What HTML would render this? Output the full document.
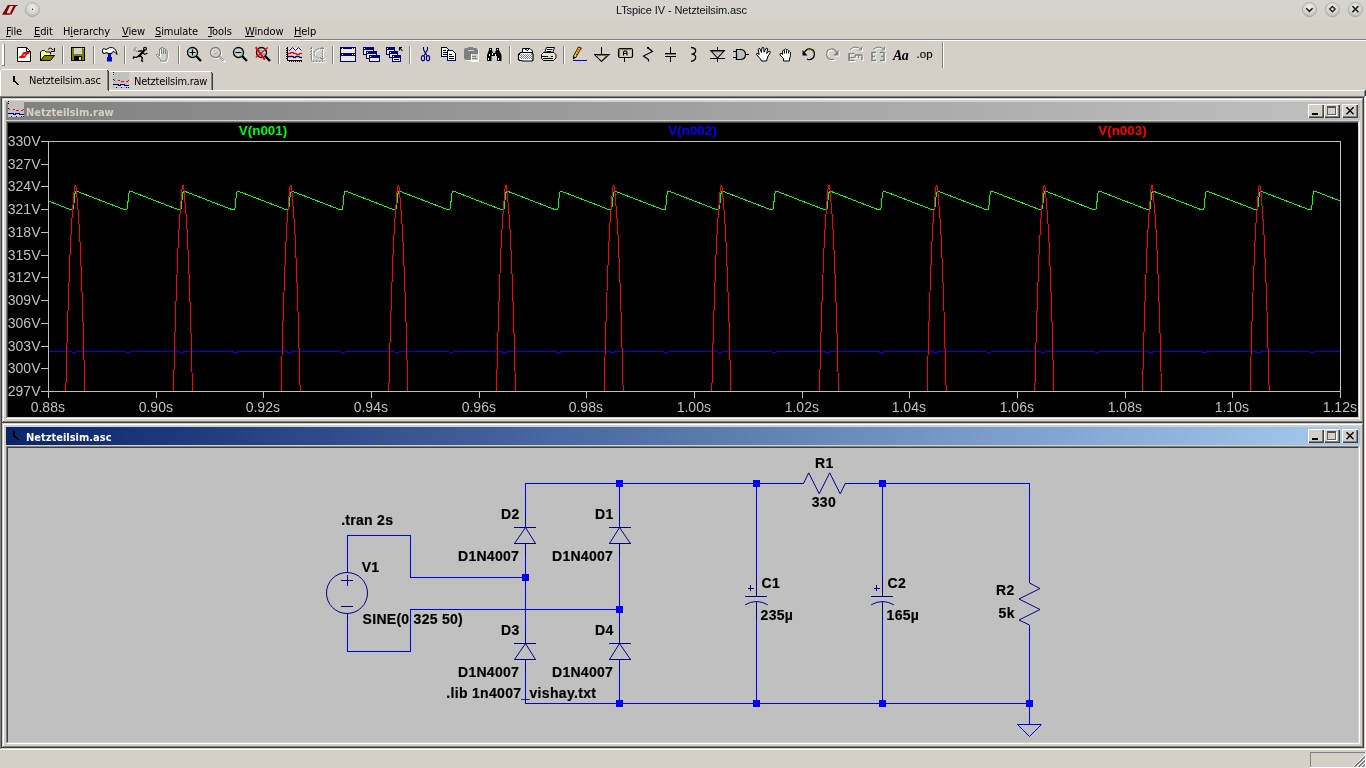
<!DOCTYPE html>
<html lang="en"><head><meta charset="utf-8"><title>LTspice IV - Netzteilsim.asc</title>
<style>
html,body{margin:0;padding:0;}
body{width:1366px;height:768px;overflow:hidden;position:relative;background:#d4d0c8;font-family:"Liberation Sans","DejaVu Sans",sans-serif;font-size:11px;color:#000;}
.abs{position:absolute;}
.px{position:absolute;}
#titlebar{left:0;top:0;width:1366px;height:20px;background:linear-gradient(#d6d3cf,#d6d3cf);}
#wtitle{left:616px;top:1px;width:200px;height:20px;line-height:19px;text-align:left;font-size:11px;color:#111;letter-spacing:-0.1px;white-space:nowrap;}
#menubar{left:0;top:20px;width:1366px;height:20px;}
.mi{position:absolute;top:25px;font-size:11px;line-height:13px;white-space:nowrap;font-family:"DejaVu Sans Condensed","DejaVu Sans","Liberation Sans",sans-serif;letter-spacing:-0.1px;}
.mi u{text-decoration:underline;text-underline-offset:1px;}
.tabtxt{position:absolute;font-size:11px;line-height:13px;white-space:nowrap;font-family:"DejaVu Sans Condensed","DejaVu Sans","Liberation Sans",sans-serif;letter-spacing:-0.25px;}
.child{position:absolute;left:2px;width:1362px;height:325px;background:#d4d0c8;box-shadow:inset -1px -1px 0 #404040, inset 1px 1px 0 #d4d0c8, inset -2px -2px 0 #808080, inset 2px 2px 0 #fff;}
.ctitle{position:absolute;left:4px;top:4px;width:1354px;height:18px;}
.ctitle span{position:absolute;left:20px;top:4px;font:bold 11px/14px "DejaVu Sans Condensed","DejaVu Sans","Liberation Sans",sans-serif;white-space:nowrap;}
.view{position:absolute;left:4px;top:23px;width:1354px;height:298px;box-shadow:inset -1px -1px 0 #fff, inset 1px 1px 0 #808080, inset -2px -2px 0 #d4d0c8, inset 2px 2px 0 #404040;}
.content{position:absolute;left:2px;top:2px;width:1350px;height:294px;overflow:hidden;}
.cbtn{position:absolute;top:2px;width:16px;height:14px;background:#d4d0c8;box-shadow:inset 1px 1px 0 #fff, inset -1px -1px 0 #404040, inset -2px -2px 0 #808080;}
svg{position:absolute;left:0;top:0;overflow:visible;}
svg text{white-space:pre;}
#wtitle,.mi,.tabtxt,.ctitle span,svg{will-change:transform;}
</style></head><body>

<div class="abs" id="titlebar"></div>
<div class="abs" id="wtitle">LTspice IV - Netzteilsim.asc</div>
<svg width="1366" height="20" viewBox="0 0 1366 20">
<defs>
<radialGradient id="kb" cx="50%" cy="35%" r="65%"><stop offset="0" stop-color="#eeedeb"/><stop offset="0.7" stop-color="#d2d0cc"/><stop offset="1" stop-color="#aeaca8"/></radialGradient>
</defs>
<path d="M7.8 4.9 H18 L17.2 6.1 H16 L11.3 14.8 H2 Z" fill="#800000"/><path d="M9.9 6.1 H13.4 L10 13.3 H6.5 Z" fill="#d6d3cf"/><path d="M9.9 13.3 L10.5 14.9" stroke="#d6d3cf" stroke-width="0.6"/>
<circle cx="32.4" cy="9.6" r="7" fill="url(#kb)" stroke="#aaa8a4" stroke-width="0.8"/>
<rect x="32" y="8.6" width="1" height="1.4" fill="#333"/>
<g>
<circle cx="1309.4" cy="9.6" r="7.1" fill="url(#kb)" stroke="#aaa8a4" stroke-width="0.8"/>
<path d="M1306.2 8.3 L1309.4 11.4 L1312.6 8.3" fill="none" stroke="#222" stroke-width="1.5"/>
<circle cx="1332.4" cy="9.6" r="7.1" fill="url(#kb)" stroke="#aaa8a4" stroke-width="0.8"/>
<path d="M1332.4 6.4 L1335.1 9.1 L1332.4 11.8 L1329.7 9.1 Z" fill="none" stroke="#222" stroke-width="1.4"/>
<circle cx="1355.4" cy="9.6" r="7.1" fill="url(#kb)" stroke="#aaa8a4" stroke-width="0.8"/>
<path d="M1352.4 6.1 L1358.4 12.1 M1358.4 6.1 L1352.4 12.1" fill="none" stroke="#222" stroke-width="1.5"/>
</g>
</svg>
<div class="mi" style="left:6px"><u>F</u>ile</div>
<div class="mi" style="left:34px"><u>E</u>dit</div>
<div class="mi" style="left:63px">H<u>i</u>erarchy</div>
<div class="mi" style="left:122px"><u>V</u>iew</div>
<div class="mi" style="left:155px"><u>S</u>imulate</div>
<div class="mi" style="left:208px"><u>T</u>ools</div>
<div class="mi" style="left:245px"><u>W</u>indow</div>
<div class="mi" style="left:294px"><u>H</u>elp</div>
<div class="px" style="left:0;top:39px;width:1366px;height:1px;background:#808080"></div>
<div class="px" style="left:0;top:40px;width:1366px;height:1px;background:#fff"></div>
<div class="px" style="left:2px;top:44px;width:2px;height:21px;background:#fff"></div>
<div class="px" style="left:4px;top:44px;width:1px;height:22px;background:#808080"></div><div class="px" style="left:2px;top:65px;width:2px;height:1px;background:#808080"></div>
<div class="px" style="left:62px;top:46px;width:1px;height:18px;background:#808080"></div>
<div class="px" style="left:63px;top:46px;width:1px;height:18px;background:#fff"></div>
<div class="px" style="left:93px;top:46px;width:1px;height:18px;background:#808080"></div>
<div class="px" style="left:94px;top:46px;width:1px;height:18px;background:#fff"></div>
<div class="px" style="left:124px;top:46px;width:1px;height:18px;background:#808080"></div>
<div class="px" style="left:125px;top:46px;width:1px;height:18px;background:#fff"></div>
<div class="px" style="left:178px;top:46px;width:1px;height:18px;background:#808080"></div>
<div class="px" style="left:179px;top:46px;width:1px;height:18px;background:#fff"></div>
<div class="px" style="left:278px;top:46px;width:1px;height:18px;background:#808080"></div>
<div class="px" style="left:279px;top:46px;width:1px;height:18px;background:#fff"></div>
<div class="px" style="left:332px;top:46px;width:1px;height:18px;background:#808080"></div>
<div class="px" style="left:333px;top:46px;width:1px;height:18px;background:#fff"></div>
<div class="px" style="left:409px;top:46px;width:1px;height:18px;background:#808080"></div>
<div class="px" style="left:410px;top:46px;width:1px;height:18px;background:#fff"></div>
<div class="px" style="left:509px;top:46px;width:1px;height:18px;background:#808080"></div>
<div class="px" style="left:510px;top:46px;width:1px;height:18px;background:#fff"></div>
<div class="px" style="left:563px;top:46px;width:1px;height:18px;background:#808080"></div>
<div class="px" style="left:564px;top:46px;width:1px;height:18px;background:#fff"></div>
<div class="px" style="left:942px;top:42px;width:1px;height:26px;background:#808080"></div><div class="px" style="left:943px;top:42px;width:1px;height:26px;background:#fff"></div>
<svg width="1366" height="70" viewBox="0 0 1366 70"><g transform="translate(16,46)"><path d="M1.5 1.5 H10.5 L14.5 5.5 V15.5 H1.5 Z" fill="#fff" stroke="#000"/><path d="M10.5 1.5 V5.5 H14.5" fill="none" stroke="#000"/><path d="M7.4 6 H14 L12.7 8 H11.4 L8.7 12 H2.4 L3.8 10 H5 Z" fill="#ff0000"/><path d="M8 8.2 H9.5 L8.6 9.8 H7.1 Z" fill="#fff"/></g><g transform="translate(39,46)"><path d="M1.5 14.5 V6 L3 4.5 H5.5 L7 6 H11.5 V8.5" fill="#ffff80" stroke="#000"/><path d="M1.5 14.5 L5.5 9.5 H15.5 L11.5 14.5 Z" fill="#808000" stroke="#000"/><path d="M9 3.5 Q11.5 0.5 14.3 4.2" fill="none" stroke="#000"/><path d="M15.5 2 V5.5 H12" fill="none" stroke="#000"/></g><g transform="translate(70,46)" shape-rendering="crispEdges"><rect x="1.5" y="1.5" width="13" height="13" fill="#808000" stroke="#000"/><rect x="4" y="2" width="8" height="6" fill="#d4d0c8"/><rect x="4" y="10" width="8" height="4" fill="#000"/><rect x="9" y="11" width="2" height="3" fill="#d4d0c8"/><rect x="13" y="2" width="1" height="1" fill="#d4d0c8"/></g><g transform="translate(101,46)"><defs><linearGradient id="hm" x1="0" y1="0" x2="0" y2="1"><stop offset="0" stop-color="#fff"/><stop offset="0.55" stop-color="#fff"/><stop offset="1" stop-color="#909090"/></linearGradient></defs><path d="M1.5 4.5 Q1.5 2.5 3.2 2.6 L5 3.6 Q8.5 0.8 11.5 1.6 Q15.5 3 16 8.6 Q14.5 6.2 12.8 5.6 Q11 5.4 10.8 7.6 L6.4 7.6 L6.2 6.4 L3.2 7.6 Q1.5 7.6 1.5 6 Z" fill="url(#hm)" stroke="#000"/><path d="M7 8 H10 V11 H11 V15.5 H6 V11 H7 Z" fill="#0000c8"/></g><g transform="translate(132,46)"><g stroke="#000" fill="none" stroke-linecap="round"><circle cx="13" cy="2.7" r="1.4" fill="#fff" stroke-width="1.2"/><path d="M12 4.6 L7.2 10" stroke-width="2.2"/><path d="M10.8 5.6 L8.8 4.6 L6.5 5.4" stroke-width="1.2"/><path d="M10.6 6.8 L12.8 8.4 L15 7.2" stroke-width="1.2"/><path d="M7.2 10 L4 11.4 L1.6 11 L1.4 12.2" stroke-width="1.4"/><path d="M8 9.6 L10.4 12 L9.6 14.8 L10.6 15.2" stroke-width="1.4"/></g><path d="M2 2.5 L4.5 1.5 M1 4.5 L4 3.5 M3.5 5.8 L5.5 5" stroke="#808080" stroke-width="0.9" fill="none"/></g><g transform="translate(155,46)"><path d="M5.5 15 L5.5 13.5 L1.5 9.5 Q1 8.2 2.2 8.2 L4.5 10 V3 Q5.3 1.8 6.2 3 V1.8 Q7.2 0.6 8.2 1.8 V2.6 Q9.2 1.6 10.2 2.8 V4 Q11.2 3.2 12.2 4.4 V11.5 L11.2 13.5 V15 Z" fill="none" stroke="#fff" transform="translate(1,1)"/><path d="M5.5 15 L5.5 13.5 L1.5 9.5 Q1 8.2 2.2 8.2 L4.5 10 V3 Q5.3 1.8 6.2 3 V1.8 Q7.2 0.6 8.2 1.8 V2.6 Q9.2 1.6 10.2 2.8 V4 Q11.2 3.2 12.2 4.4 V11.5 L11.2 13.5 V15 Z" fill="none" stroke="#808080"/><path d="M6.5 3 V8 M8.5 2.5 V8 M10.5 4 V8" stroke="#808080" fill="none"/></g><g transform="translate(186,46)"><circle cx="6.5" cy="6.5" r="5" fill="none" stroke="#000" stroke-width="1.3"/><path d="M10.3 10.3 L15 15" stroke="#000" stroke-width="2.3"/><path d="M2.6 5.2 Q3.2 3.4 4.8 2.8" stroke="#00e8e8" stroke-width="1.1" fill="none"/><path d="M8.2 10 Q9.8 9.4 10.4 7.8" stroke="#00e8e8" stroke-width="1.1" fill="none"/><path d="M3.5 6.5 H9.5 M6.5 3.5 V9.5" stroke="#000" stroke-width="1.2"/></g><g transform="translate(209,46)"><circle cx="7.5" cy="7.5" r="5" fill="none" stroke="#fff" stroke-width="1.2"/><path d="M11.5 11.5 L16 16" stroke="#fff" stroke-width="2"/><circle cx="6.5" cy="6.5" r="5" fill="none" stroke="#808080" stroke-width="1.3"/><path d="M10.3 10.3 L15 15" stroke="#808080" stroke-width="2.3" stroke-dasharray='1 0.6'/><path d="M4 5.5 Q4.6 4.2 6 3.8 M5.5 8 Q7.5 8 8.4 6" stroke="#a0a0a0" stroke-width="0.9" fill="none"/></g><g transform="translate(232,46)"><circle cx="6.5" cy="6.5" r="5" fill="none" stroke="#000" stroke-width="1.3"/><path d="M10.3 10.3 L15 15" stroke="#000" stroke-width="2.3"/><path d="M2.6 5.2 Q3.2 3.4 4.8 2.8" stroke="#00e8e8" stroke-width="1.1" fill="none"/><path d="M8.2 10 Q9.8 9.4 10.4 7.8" stroke="#00e8e8" stroke-width="1.1" fill="none"/><path d="M3.5 6.5 H9.5" stroke="#000" stroke-width="1.2"/></g><g transform="translate(255,46)"><circle cx="6.5" cy="6.5" r="5" fill="none" stroke="#000" stroke-width="1.3"/><path d="M10.3 10.3 L15 15" stroke="#000" stroke-width="2.3"/><path d="M4.5 3.5 H7 V5 H4.5 Z M7.5 7 H10 V9 H7.5 Z" fill="#00e8e8"/><path d="M0.8 1.2 L9.8 13.6" stroke="#ff0000" stroke-width="2"/><path d="M12.8 1.6 L0.8 11.4" stroke="#ff0000" stroke-width="1.3"/></g><g transform="translate(286,46)" shape-rendering="crispEdges"><rect x="2" y="2" width="14" height="12" fill="#ece9d8"/><path d="M1.5 1 V15 M1 14.5 H16" stroke="#000" fill="none"/><path d="M0.5 2 V3 M0.5 4 V5 M0.5 6 V7 M0.5 8 V9 M0.5 10 V11 M0.5 12 V13 M3 15.5 H4 M5 15.5 H6 M7 15.5 H8 M9 15.5 H10 M11 15.5 H12 M13 15.5 H14 M15 15.5 H16" stroke="#000" fill="none"/></g><g transform="translate(286,46)"><path d="M2.5 3.6 L3.5 4.6 L6.5 1.6 L9.5 4.6 L12.5 1.6 L15.5 4.6" stroke="#0000a0" fill="none"/><path d="M2 7.5 H4 L5 6.5 H7 L8 7.5 H10 L11 8.5 H13 L14 7.5 H16" stroke="#ff0000" stroke-width="1.5" fill="none"/><path d="M2 10.5 H7 L8 11.5 H9 L10 10.5 H13 L14 11.5 H16" stroke="#000080" stroke-width="1.3" fill="none"/></g><g transform="translate(309,46)"><path d="M2.5 1 V15 H16 M1.5 2 V3 M1.5 5 V6 M1.5 8 V9 M1.5 11 V12 M4 15.5 H5 M7 15.5 H8 M10 15.5 H11 M13 15.5 H14 M13.5 1.5 V13.5 M13.2 2 Q5.2 3 5.2 7.5 Q5.2 12 13.2 13 M11.5 3.5 L13.5 1.5 L15.5 3.5 M11.5 11.5 L13.5 13.5 L15.5 11.5" stroke="#fff" fill="none" transform="translate(1,1)"/><path d="M2.5 1 V15 H16 M1.5 2 V3 M1.5 5 V6 M1.5 8 V9 M1.5 11 V12 M4 15.5 H5 M7 15.5 H8 M10 15.5 H11 M13 15.5 H14 M13.5 1.5 V13.5 M13.2 2 Q5.2 3 5.2 7.5 Q5.2 12 13.2 13 M11.5 3.5 L13.5 1.5 L15.5 3.5 M11.5 11.5 L13.5 13.5 L15.5 11.5" stroke="#808080" fill="none" stroke-dasharray="2 0.7"/></g><g transform="translate(340,46)" shape-rendering="crispEdges"><rect x="0.5" y="1.5" width="15" height="14" fill="#ece9d8" stroke="#000080"/><rect x="1" y="1" width="15" height="2" fill="#000080"/><rect x="1" y="7" width="15" height="3" fill="#000080"/><rect x="2" y="2" width="1" height="1" fill="#fff"/><rect x="12" y="2" width="1" height="1" fill="#fff"/><rect x="14" y="2" width="1" height="1" fill="#fff"/><rect x="2" y="8" width="1" height="1" fill="#fff"/><rect x="12" y="8" width="1" height="1" fill="#fff"/><rect x="14" y="8" width="1" height="1" fill="#fff"/></g><g transform="translate(363,46)" shape-rendering="crispEdges"><rect x="0.5" y="1.5" width="10" height="7" fill="#ece9d8" stroke="#000080"/><rect x="0" y="1" width="11" height="3" fill="#000080"/><rect x="1" y="2" width="1" height="1" fill="#fff"/><rect x="3.5" y="5.5" width="10" height="7" fill="#ece9d8" stroke="#000080"/><rect x="3" y="5" width="11" height="3" fill="#000080"/><rect x="4" y="6" width="1" height="1" fill="#fff"/><rect x="6.5" y="9.5" width="10" height="6" fill="#ece9d8" stroke="#000080"/><rect x="6" y="9" width="11" height="3" fill="#000080"/><rect x="7" y="10" width="1" height="1" fill="#fff"/></g><g transform="translate(386,46)" shape-rendering="crispEdges"><rect x="0.5" y="1.5" width="8" height="7" fill="#ece9d8" stroke="#000080"/><rect x="0" y="1" width="9" height="3" fill="#000080"/><rect x="1" y="2" width="1" height="1" fill="#fff"/><rect x="3.5" y="5.5" width="8" height="6" fill="#ece9d8" stroke="#000080"/><rect x="3" y="5" width="9" height="3" fill="#000080"/><rect x="4" y="6" width="1" height="1" fill="#fff"/><rect x="6.5" y="9.5" width="8" height="6" fill="#ece9d8" stroke="#000080"/><rect x="6" y="9" width="9" height="3" fill="#000080"/><rect x="7" y="10" width="1" height="1" fill="#fff"/><rect x="8" y="13" width="5" height="1" fill="#000"/></g><g transform="translate(386,46)"><path d="M13 1.5 H16 M13.5 1 V4.5 M13.5 1.5 L16.5 5" stroke="#000" stroke-width="1.1" fill="none"/></g><g transform="translate(417,46)"><path d="M6.5 1 L6.5 3.5 L9.8 9.6 M10.5 1 L10.5 3.5 L7.2 9.6" stroke="#000080" stroke-width="1.1" fill="none"/><ellipse cx="6" cy="12.2" rx="1.6" ry="2.6" fill="none" stroke="#000080" stroke-width="1.1"/><ellipse cx="11" cy="12.2" rx="1.6" ry="2.6" fill="none" stroke="#000080" stroke-width="1.1"/></g><g transform="translate(440,46)" shape-rendering="crispEdges"><path d="M1.5 1.5 H6.5 L8.5 3.5 V10.5 H1.5 Z" fill="#fff" stroke="#000"/><path d="M3 4.5 H6 M3 6.5 H7 M3 8.5 H7" stroke="#000"/><path d="M7.5 4.5 H12.5 L15.5 7.5 V14.5 H7.5 Z" fill="#fff" stroke="#000080"/><path d="M9 8.5 H12 M9 10.5 H14 M9 12.5 H14" stroke="#000"/></g><g transform="translate(463,46)"><rect x="2" y="2" width="14" height="13" rx="2" fill="#fff"/><rect x="1" y="2" width="14" height="12" rx="2" fill="#808080"/><rect x="5" y="1" width="5" height="2" fill="#808080"/><rect x="5" y="4" width="6" height="1" fill="#d4d0c8"/><rect x="8" y="8" width="8" height="8" fill="#fff"/><rect x="8" y="8" width="7" height="6" fill="#d4d0c8"/><rect x="8" y="8" width="1" height="7" fill="#fff"/><rect x="9" y="10" width="4" height="1" fill="#808080"/><rect x="9" y="12" width="5" height="1" fill="#808080"/></g><g transform="translate(486,46)"><path d="M3 2 H6 V4 L7 7 H9 L10 4 V2 H13 V4 L15.5 9 V15 H11 V10 H5.5 V15 H1 V9 L3 4 Z" fill="#000"/><rect x="4" y="3" width="1" height="1" fill="#fff"/><rect x="11" y="3" width="1" height="1" fill="#fff"/><rect x="3" y="8" width="1" height="2" fill="#fff"/><rect x="6" y="7" width="1" height="2" fill="#fff"/><rect x="9" y="8" width="1" height="2" fill="#fff"/><rect x="2" y="12" width="1" height="2" fill="#fff"/><rect x="12" y="12" width="1" height="2" fill="#fff"/></g><g transform="translate(517,46)"><defs><pattern id="dth" width="2" height="2" patternUnits="userSpaceOnUse"><rect width="2" height="2" fill="#fff"/><rect width="1" height="1" fill="#808080"/><rect x="1" y="1" width="1" height="1" fill="#808080"/></pattern></defs><path d="M5.5 6.5 V2.5 H13 L15.5 5 V7" fill="#fff" stroke="#000"/><path d="M8 3.5 H9.5 M11 3.5 H12 M9.5 4.5 H11" stroke="#000"/><path d="M3.5 6.5 H14.5 L16 8 V14 L15 15 H5.5 L4.5 14.5 H2.5 L1.5 13.5 V8.5 Z" fill="#fff" stroke="#000" stroke-width="1.2"/><rect x="3" y="8" width="12" height="5" fill="url(#dth)"/><rect x="2" y="8" width="1" height="1" fill="#000"/></g><g transform="translate(540,46)"><path d="M4.5 7 L6.5 1.5 H14.5 L12.5 7" fill="#fff" stroke="#000"/><path d="M7 3.5 H12.5 M6.5 5.5 H11.5" stroke="#000"/><path d="M1.5 8.5 L3.5 6.5 H14 L16 8.5 V12 L13.5 14.5 H3.5 L1.5 12.5 Z" fill="#e4e2dc" stroke="#000"/><path d="M2 10.5 H13 M3 12.5 H13" stroke="#000"/><rect x="8" y="10" width="3" height="1.6" fill="#e8e000"/></g><g transform="translate(571,46)"><path d="M7.5 1 L10 2.2 L4.6 11.8 L2.2 10.6 Z" fill="#f8e800" stroke="#000" stroke-width="0.9"/><path d="M9 1.2 L10.6 2 L9.6 3.8" fill="#ff0000" stroke="#ff0000" stroke-width="0.8"/><path d="M2.2 10.6 L4.6 11.8 L1.8 13.8 Z" fill="#000"/><path d="M7 3.4 L8.4 4.2 M5.8 5.6 L7.2 6.4 M4.6 7.8 L6 8.6" stroke="#ff0000" stroke-width="1"/><rect x="2" y="14" width="14" height="1" fill="#0000ff"/></g><g transform="translate(594,46)"><path d="M7.5 1 V8" stroke="#000" shape-rendering="crispEdges"/><path d="M0 8.5 H15.5" stroke="#000" shape-rendering="crispEdges"/><path d="M0.8 8.8 L7.5 15.4 L14.6 8.8" fill="none" stroke="#000" stroke-width="1.1"/><path d="M3 9.5 H12.5 L8 14" fill="none" stroke="#808000" stroke-width="1"/></g><g transform="translate(617,46)"><rect x="1.5" y="2.5" width="14" height="9" rx="1.5" fill="#d4d0c8" stroke="#000" stroke-width="1.2"/><path d="M2.6 10.5 V3.6 H14" stroke="#808000" fill="none"/><path d="M7.5 12 V16" stroke="#000" shape-rendering="crispEdges"/><path d="M6.5 9.5 V6 L7.5 5 H9 L10 6 V9.5 M6.5 7.5 H10" stroke="#000" stroke-width="1.1" fill="none"/></g><g transform="translate(640,46)"><path d="M7.5 1.5 L12.5 5.5 L3.5 10 L8.5 13.5 V15.5" stroke="#000" stroke-width="1.2" fill="none"/><rect x="7" y="1" width="2" height="1.6" fill="#000"/></g><g transform="translate(663,46)" shape-rendering="crispEdges"><path d="M7.5 1 V7 M7.5 11 V16" stroke="#000"/><rect x="2" y="7" width="11" height="1" fill="#000"/><rect x="2" y="10" width="11" height="1" fill="#000"/><rect x="2" y="8" width="11" height="0.5" fill="#808080"/><rect x="2" y="9.5" width="11" height="0.5" fill="#808080"/></g><g transform="translate(686,46)"><path d="M5 1.5 Q10 2 9.6 5 Q9.4 8 5.5 8.2 Q10 8.6 9.6 11.6 Q9.4 14.6 5 15.4" stroke="#000" stroke-width="1.3" fill="none"/></g><g transform="translate(709,46)"><path d="M8.5 1 V16" stroke="#000" shape-rendering="crispEdges"/><path d="M1 4.5 H16 M1 12.5 H16" stroke="#000" shape-rendering="crispEdges"/><path d="M2 5 L8.5 12 L15 5 Z" fill="#c0c0c0" stroke="#000" stroke-width="1.1"/></g><g transform="translate(732,46)"><path d="M4.5 3.5 H9 Q13.5 4 13.5 8.5 Q13.5 13 9 13.5 H4.5 Z" fill="#c0c0c0" stroke="#000" stroke-width="1.2"/><path d="M1 5.5 H4 M1 11.5 H4 M14 8.5 H17" stroke="#000" shape-rendering="crispEdges"/></g><g transform="translate(755,46)"><path d="M6.5 15 L5.5 13 L1.5 8.6 Q1.2 7 2.8 7.4 L4.2 8.6 L3.2 3.4 Q3.8 1.6 5 2.8 L6.4 6.4 L7 1.8 Q8 0.4 8.8 1.8 L9 6.2 L11 2.4 Q12.2 1.4 12.8 2.8 L11.6 7.4 L14.2 5.2 Q15.6 5 15.2 6.6 L12.6 11 L11.6 15 Z" fill="#fff" stroke="#000"/></g><g transform="translate(778,46)"><path d="M5.5 15 V12.5 L2 9 Q1.6 7.2 3.2 7.4 L4.6 8.4 V5 Q5.4 3.4 6.4 4.8 V3.6 Q7.4 2.2 8.4 3.6 V4.2 Q9.4 3 10.4 4.4 V5.4 Q11.6 4.6 12.4 6 V10.5 L11.4 13 V15 Z" fill="#fff" stroke="#000"/><path d="M6.5 5 V7.5 M8.5 4.5 V7.5 M10.5 5.5 V7.5" stroke="#000" fill="none"/></g><g transform="translate(801,46)"><path d="M3 8 Q4.5 2.6 9 3 Q13.6 3.6 13.4 8.4 Q13 13.2 8.6 13.6 Q7 13.6 6 13" stroke="#000" stroke-width="1.3" fill="none"/><path d="M6.5 4 Q9.5 2.4 12.4 5.4" stroke="#808000" stroke-width="1" fill="none"/><path d="M1.5 4 V9.5 H6.5 Z" fill="#000"/></g><g transform="translate(824,46)"><path d="M13 8 Q11.5 2.6 7 3 Q2.4 3.6 2.6 8.4 Q3 13.2 7.4 13.6 Q9 13.6 10 13" stroke="#fff" stroke-width="1.2" fill="none" transform="translate(1,1)"/><path d="M13 8 Q11.5 2.6 7 3 Q2.4 3.6 2.6 8.4 Q3 13.2 7.4 13.6 Q9 13.6 10 13" stroke="#808080" stroke-width="1.2" fill="none"/><path d="M15.5 5 V10.5 H10.5 Z" fill="#fff"/><path d="M14.5 4 V9.5 H9.5 Z" fill="#808080"/></g><g transform="translate(847,46)"><text x="1.5" y="16" font-family="Liberation Sans, sans-serif" font-weight="bold" font-size="11.5" fill="#fff">E</text><path d="M9 10 H16 M9 10 V13 M12.5 10 V13 M16 10 V15" stroke="#fff" stroke-width="1.4" fill="none"/><path d="M3 3.5 Q8 -1 14 3 M14.5 1 V4 H11.5" stroke="#fff" fill="none" transform="translate(1,1)"/><text x="0.5" y="15" font-family="Liberation Sans, sans-serif" font-weight="bold" font-size="11.5" fill="#808080">E</text><path d="M8 9 H15 M8 9 V12 M11.5 9 V12 M15 9 V14" stroke="#808080" stroke-width="1.4" fill="none"/><path d="M3 3.5 Q8 -1 14 3 M14.5 1 V4 H11.5" stroke="#808080" fill="none"/></g><g transform="translate(870,46)"><path d="M7 7.5 H3 V15.5 H7 M3 11.5 H6 M11 7.5 H15 V15.5 H11 M15 11.5 H12" stroke="#fff" stroke-width="1.6" fill="none"/><path d="M3 3.5 Q8 -1 14 3 M14.5 1 V4 H11.5" stroke="#fff" fill="none" transform="translate(1,1)"/><path d="M6 6.5 H2 V14.5 H6 M2 10.5 H5 M10 6.5 H14 V14.5 H10 M14 10.5 H11" stroke="#808080" stroke-width="1.6" fill="none"/><path d="M3 3.5 Q8 -1 14 3 M14.5 1 V4 H11.5" stroke="#808080" fill="none"/></g><g transform="translate(893,46)"><text x="0" y="13.5" font-family="Liberation Serif, serif" font-style="italic" font-weight="bold" font-size="14" fill="#000" letter-spacing="-0.6">Aa</text></g><g transform="translate(916,46)"><text x="0.5" y="11.5" font-family="Liberation Sans, sans-serif" font-size="11.5" fill="#000" letter-spacing="0.1" stroke="#000" stroke-width="0.15">.op</text></g></svg>
<div class="px" style="left:2px;top:69px;width:105px;height:1px;background:#fff"></div>
<div class="px" style="left:1px;top:70px;width:1px;height:1px;background:#fff"></div>
<div class="px" style="left:0px;top:71px;width:1px;height:25px;background:#fff"></div>
<div class="px" style="left:107px;top:70px;width:1px;height:1px;background:#404040"></div>
<div class="px" style="left:107px;top:71px;width:1px;height:19px;background:#808080"></div>
<div class="px" style="left:108px;top:71px;width:1px;height:20px;background:#404040"></div>
<div class="px" style="left:109px;top:71px;width:102px;height:1px;background:#fff"></div>
<div class="px" style="left:211px;top:72px;width:1px;height:1px;background:#404040"></div>
<div class="px" style="left:211px;top:73px;width:1px;height:17px;background:#808080"></div>
<div class="px" style="left:212px;top:73px;width:1px;height:17px;background:#404040"></div>
<div class="px" style="left:109px;top:90px;width:1255px;height:1px;background:#fff"></div>
<div class="px" style="left:1364px;top:91px;width:1px;height:5px;background:#808080"></div>
<div class="px" style="left:1365px;top:90px;width:1px;height:6px;background:#404040"></div>

<div class="tabtxt" style="left:29px;top:74px">Netzteilsim.asc</div>
<div class="tabtxt" style="left:134px;top:75px">Netzteilsim.raw</div>
<svg width="16" height="16" viewBox="0 0 16 16" style="left:8px;top:73px" shape-rendering="crispEdges"><rect x="5" y="3" width="2" height="6" fill="#000"/><rect x="7" y="8" width="1" height="2" fill="#000"/><rect x="8" y="9" width="1" height="2" fill="#000"/><rect x="9" y="10" width="1" height="2" fill="#000"/><rect x="10" y="11" width="1" height="1" fill="#000"/></svg>
<svg width="16" height="16" viewBox="0 0 16 16" style="left:113px;top:72px" shape-rendering="crispEdges"><rect x="0" y="0" width="16" height="16" fill="#c0c0c0"/><rect x="0" y="0" width="1" height="1" fill="#000"/><rect x="0" y="2" width="1" height="1" fill="#000"/><rect x="0" y="7" width="1" height="1" fill="#000"/><rect x="0" y="12" width="1" height="1" fill="#000"/><rect x="3" y="15" width="1" height="1" fill="#000"/><rect x="8" y="15" width="1" height="1" fill="#000"/><rect x="13" y="15" width="1" height="1" fill="#000"/><rect x="15" y="15" width="1" height="1" fill="#000"/><rect x="1" y="8" width="1" height="1" fill="#f00"/><rect x="5" y="8" width="2" height="1" fill="#f00"/><rect x="8" y="9" width="3" height="1" fill="#f00"/><rect x="13" y="9" width="2" height="1" fill="#f00"/><rect x="15" y="8" width="1" height="1" fill="#f00"/><rect x="1" y="12" width="5" height="1" fill="#000080"/><rect x="5" y="13" width="3" height="1" fill="#000080"/><rect x="7" y="12" width="5" height="1" fill="#000080"/><rect x="11" y="13" width="5" height="1" fill="#000080"/><rect x="1" y="14" width="15" height="1" fill="#d8d8d8"/></svg>
<div class="abs" style="left:0;top:96px;width:1366px;height:654px;background:#808080;box-shadow:inset -1px -1px 0 #fff, inset 1px 1px 0 #808080, inset -2px -2px 0 #d4d0c8, inset 2px 2px 0 #404040;"></div>
<div class="child" style="top:98px">
<div class="ctitle" style="background:linear-gradient(90deg,#808080,#c0c0c0)"><span style="color:#d4d0c8">Netzteilsim.raw</span><div class="cbtn" style="left:1302px"><div class="px" style="left:4px;top:9px;width:6px;height:2px;background:#000"></div></div><div class="cbtn" style="left:1318px"><div class="px" style="left:3px;top:2px;width:9px;height:9px;box-sizing:border-box;border:1px solid #606060;border-top:2px solid #505050;box-shadow:1px 1px 0 #fff"></div></div><div class="cbtn" style="left:1336px"><svg width="16" height="14" viewBox="0 0 16 14"><path d="M4.5 3.2 L11.5 10.2 M11.5 3.2 L4.5 10.2" stroke="#000" stroke-width="1.5" fill="none"/></svg></div><svg width="16" height="16" viewBox="0 0 16 16" style="left:2px;top:-1px" shape-rendering="crispEdges"><rect x="0" y="0" width="16" height="16" fill="#c0c0c0"/><rect x="0" y="0" width="1" height="1" fill="#000"/><rect x="0" y="2" width="1" height="1" fill="#000"/><rect x="0" y="7" width="1" height="1" fill="#000"/><rect x="0" y="12" width="1" height="1" fill="#000"/><rect x="3" y="15" width="1" height="1" fill="#000"/><rect x="8" y="15" width="1" height="1" fill="#000"/><rect x="13" y="15" width="1" height="1" fill="#000"/><rect x="15" y="15" width="1" height="1" fill="#000"/><rect x="1" y="8" width="1" height="1" fill="#f00"/><rect x="5" y="8" width="2" height="1" fill="#f00"/><rect x="8" y="9" width="3" height="1" fill="#f00"/><rect x="13" y="9" width="2" height="1" fill="#f00"/><rect x="15" y="8" width="1" height="1" fill="#f00"/><rect x="1" y="12" width="5" height="1" fill="#000080"/><rect x="5" y="13" width="3" height="1" fill="#000080"/><rect x="7" y="12" width="5" height="1" fill="#000080"/><rect x="11" y="13" width="5" height="1" fill="#000080"/><rect x="1" y="14" width="15" height="1" fill="#d8d8d8"/></svg></div>
<div class="view"><div class="content" style="background:linear-gradient(#000,#000)">
<svg width="1350" height="294" viewBox="8 123 1350 294" font-family="Liberation Sans, sans-serif">
<g shape-rendering="crispEdges" stroke="#c0c0c0" stroke-width="1" fill="none">
<rect x="48.5" y="141.5" width="1292" height="250"/>
<line x1="41" y1="141.5" x2="48" y2="141.5"/>
<line x1="41" y1="164.5" x2="48" y2="164.5"/>
<line x1="41" y1="186.5" x2="48" y2="186.5"/>
<line x1="41" y1="209.5" x2="48" y2="209.5"/>
<line x1="41" y1="232.5" x2="48" y2="232.5"/>
<line x1="41" y1="255.5" x2="48" y2="255.5"/>
<line x1="41" y1="277.5" x2="48" y2="277.5"/>
<line x1="41" y1="300.5" x2="48" y2="300.5"/>
<line x1="41" y1="323.5" x2="48" y2="323.5"/>
<line x1="41" y1="346.5" x2="48" y2="346.5"/>
<line x1="41" y1="368.5" x2="48" y2="368.5"/>
<line x1="41" y1="391.5" x2="48" y2="391.5"/>
<line x1="48.5" y1="391" x2="48.5" y2="398"/>
<line x1="156.5" y1="391" x2="156.5" y2="398"/>
<line x1="263.5" y1="391" x2="263.5" y2="398"/>
<line x1="371.5" y1="391" x2="371.5" y2="398"/>
<line x1="479.5" y1="391" x2="479.5" y2="398"/>
<line x1="586.5" y1="391" x2="586.5" y2="398"/>
<line x1="694.5" y1="391" x2="694.5" y2="398"/>
<line x1="802.5" y1="391" x2="802.5" y2="398"/>
<line x1="909.5" y1="391" x2="909.5" y2="398"/>
<line x1="1017.5" y1="391" x2="1017.5" y2="398"/>
<line x1="1125.5" y1="391" x2="1125.5" y2="398"/>
<line x1="1232.5" y1="391" x2="1232.5" y2="398"/>
<line x1="1340.5" y1="391" x2="1340.5" y2="398"/>
</g>
<g fill="#c0c0c0" font-size="14">
<text x="40.5" y="146.0" text-anchor="end">330V</text>
<text x="40.5" y="169.0" text-anchor="end">327V</text>
<text x="40.5" y="191.0" text-anchor="end">324V</text>
<text x="40.5" y="214.0" text-anchor="end">321V</text>
<text x="40.5" y="237.0" text-anchor="end">318V</text>
<text x="40.5" y="260.0" text-anchor="end">315V</text>
<text x="40.5" y="282.0" text-anchor="end">312V</text>
<text x="40.5" y="305.0" text-anchor="end">309V</text>
<text x="40.5" y="328.0" text-anchor="end">306V</text>
<text x="40.5" y="351.0" text-anchor="end">303V</text>
<text x="40.5" y="373.0" text-anchor="end">300V</text>
<text x="40.5" y="396.0" text-anchor="end">297V</text>
<text x="47.8" y="411.5" text-anchor="middle">0.88s</text>
<text x="155.8" y="411.5" text-anchor="middle">0.90s</text>
<text x="262.8" y="411.5" text-anchor="middle">0.92s</text>
<text x="370.8" y="411.5" text-anchor="middle">0.94s</text>
<text x="478.8" y="411.5" text-anchor="middle">0.96s</text>
<text x="585.8" y="411.5" text-anchor="middle">0.98s</text>
<text x="693.8" y="411.5" text-anchor="middle">1.00s</text>
<text x="801.8" y="411.5" text-anchor="middle">1.02s</text>
<text x="908.8" y="411.5" text-anchor="middle">1.04s</text>
<text x="1016.8" y="411.5" text-anchor="middle">1.06s</text>
<text x="1124.8" y="411.5" text-anchor="middle">1.08s</text>
<text x="1231.8" y="411.5" text-anchor="middle">1.10s</text>
<text x="1339.8" y="411.5" text-anchor="middle">1.12s</text>
</g>
<g font-size="13.4" font-weight="bold" text-anchor="middle">
<text x="263" y="135.4" fill="#00ff00">V(n001)</text>
<text x="692.5" y="135.4" fill="#0000ff">V(n002)</text>
<text x="1122.5" y="135.4" fill="#ff0000">V(n003)</text>
</g>
<clipPath id="pc"><rect x="49" y="142" width="1291" height="249"/></clipPath>
<g clip-path="url(#pc)" fill="none" stroke-width="1" shape-rendering="crispEdges">
<polyline stroke="#0000ff" points="48.0,351.5 17.7,351.5 18.7,352.5 21.7,352.5 22.7,351.5 71.5,351.5 72.5,352.5 75.5,352.5 76.5,351.5 125.4,351.5 126.4,352.5 129.4,352.5 130.4,351.5 179.2,351.5 180.2,352.5 183.2,352.5 184.2,351.5 233.0,351.5 234.0,352.5 237.0,352.5 238.0,351.5 286.9,351.5 287.9,352.5 290.9,352.5 291.9,351.5 340.7,351.5 341.7,352.5 344.7,352.5 345.7,351.5 394.5,351.5 395.5,352.5 398.5,352.5 399.5,351.5 448.4,351.5 449.4,352.5 452.4,352.5 453.4,351.5 502.2,351.5 503.2,352.5 506.2,352.5 507.2,351.5 556.0,351.5 557.0,352.5 560.0,352.5 561.0,351.5 609.9,351.5 610.9,352.5 613.9,352.5 614.9,351.5 663.7,351.5 664.7,352.5 667.7,352.5 668.7,351.5 717.5,351.5 718.5,352.5 721.5,352.5 722.5,351.5 771.4,351.5 772.4,352.5 775.4,352.5 776.4,351.5 825.2,351.5 826.2,352.5 829.2,352.5 830.2,351.5 879.0,351.5 880.0,352.5 883.0,352.5 884.0,351.5 932.9,351.5 933.9,352.5 936.9,352.5 937.9,351.5 986.7,351.5 987.7,352.5 990.7,352.5 991.7,351.5 1040.5,351.5 1041.5,352.5 1044.5,352.5 1045.5,351.5 1094.4,351.5 1095.4,352.5 1098.4,352.5 1099.4,351.5 1148.2,351.5 1149.2,352.5 1152.2,352.5 1153.2,351.5 1202.0,351.5 1203.0,352.5 1206.0,352.5 1207.0,351.5 1255.9,351.5 1256.9,352.5 1259.9,352.5 1260.9,351.5 1309.7,351.5 1310.7,352.5 1313.7,352.5 1314.7,351.5 1340.0,351.5"/>
<polyline stroke="#00ff00" points="-37.4,209.5 -34.8,209.5 -34.2,208.5 -33.5,200.5 -32.7,193.5 -32.0,191.5 -30.2,191.5 16.5,209.5 19.1,209.5 19.7,208.5 20.4,200.5 21.2,193.5 21.9,191.5 23.7,191.5 70.3,209.5 72.9,209.5 73.5,208.5 74.2,200.5 75.0,193.5 75.7,191.5 77.5,191.5 124.2,209.5 126.8,209.5 127.4,208.5 128.1,200.5 128.9,193.5 129.6,191.5 131.4,191.5 178.0,209.5 180.6,209.5 181.2,208.5 181.9,200.5 182.7,193.5 183.4,191.5 185.2,191.5 231.8,209.5 234.4,209.5 235.0,208.5 235.7,200.5 236.5,193.5 237.2,191.5 239.0,191.5 285.7,209.5 288.2,209.5 288.9,208.5 289.6,200.5 290.4,193.5 291.1,191.5 292.9,191.5 339.5,209.5 342.1,209.5 342.7,208.5 343.4,200.5 344.2,193.5 344.9,191.5 346.7,191.5 393.3,209.5 395.9,209.5 396.5,208.5 397.2,200.5 398.0,193.5 398.7,191.5 400.5,191.5 447.2,209.5 449.8,209.5 450.4,208.5 451.1,200.5 451.9,193.5 452.6,191.5 454.4,191.5 501.0,209.5 503.6,209.5 504.2,208.5 504.9,200.5 505.7,193.5 506.4,191.5 508.2,191.5 554.8,209.5 557.4,209.5 558.0,208.5 558.7,200.5 559.5,193.5 560.2,191.5 562.0,191.5 608.7,209.5 611.3,209.5 611.9,208.5 612.6,200.5 613.4,193.5 614.1,191.5 615.9,191.5 662.5,209.5 665.1,209.5 665.7,208.5 666.4,200.5 667.2,193.5 667.9,191.5 669.7,191.5 716.3,209.5 718.9,209.5 719.5,208.5 720.2,200.5 721.0,193.5 721.7,191.5 723.5,191.5 770.2,209.5 772.8,209.5 773.4,208.5 774.1,200.5 774.9,193.5 775.6,191.5 777.4,191.5 824.0,209.5 826.6,209.5 827.2,208.5 827.9,200.5 828.7,193.5 829.4,191.5 831.2,191.5 877.8,209.5 880.4,209.5 881.0,208.5 881.7,200.5 882.5,193.5 883.2,191.5 885.0,191.5 931.7,209.5 934.3,209.5 934.9,208.5 935.6,200.5 936.4,193.5 937.1,191.5 938.9,191.5 985.5,209.5 988.1,209.5 988.7,208.5 989.4,200.5 990.2,193.5 990.9,191.5 992.7,191.5 1039.3,209.5 1041.9,209.5 1042.5,208.5 1043.2,200.5 1044.0,193.5 1044.7,191.5 1046.5,191.5 1093.2,209.5 1095.8,209.5 1096.4,208.5 1097.1,200.5 1097.9,193.5 1098.6,191.5 1100.4,191.5 1147.0,209.5 1149.6,209.5 1150.2,208.5 1150.9,200.5 1151.7,193.5 1152.4,191.5 1154.2,191.5 1200.8,209.5 1203.4,209.5 1204.0,208.5 1204.7,200.5 1205.5,193.5 1206.2,191.5 1208.0,191.5 1254.7,209.5 1257.3,209.5 1257.9,208.5 1258.6,200.5 1259.4,193.5 1260.1,191.5 1261.9,191.5 1308.5,209.5 1311.1,209.5 1311.7,208.5 1312.4,200.5 1313.2,193.5 1313.9,191.5 1315.7,191.5 1362.3,209.5 1364.9,209.5 1365.5,208.5 1366.2,200.5 1367.0,193.5 1367.7,191.5 1369.5,191.5"/>
<polyline stroke="#ff0000" points="65.4,406.4 65.6,397.5 65.8,388.8 66.1,380.3 66.3,371.9 66.5,363.7 66.7,355.7 66.9,347.8 67.1,340.2 67.3,332.7 67.6,325.4 67.8,318.3 68.0,311.4 68.2,304.7 68.4,298.2 68.6,291.8 68.9,285.7 69.1,279.7 69.3,274.0 69.5,268.4 69.7,263.0 69.9,257.8 70.1,252.8 70.4,248.1 70.6,243.5 70.8,239.1 71.0,234.9 71.2,230.9 71.4,227.1 71.7,223.5 71.9,220.1 72.1,216.9 72.3,214.0 72.5,211.2 72.7,208.6 72.9,206.2 73.2,204.1 73.4,201.2 73.6,197.9 73.8,195.0 74.0,192.4 74.2,190.3 74.5,188.5 74.7,187.2 74.9,186.2 75.1,185.6 75.3,185.4 75.5,185.6 75.7,186.2 76.0,187.2 76.2,188.5 76.4,190.3 76.6,192.4 76.8,195.0 77.0,197.9 77.3,201.2 77.5,204.1 77.7,206.2 77.9,208.6 78.1,211.2 78.3,214.0 78.5,216.9 78.8,220.1 79.0,223.5 79.2,227.1 79.4,230.9 79.6,234.9 79.8,239.1 80.1,243.5 80.3,248.1 80.5,252.8 80.7,257.8 80.9,263.0 81.1,268.4 81.3,274.0 81.6,279.7 81.8,285.7 82.0,291.8 82.2,298.2 82.4,304.7 82.6,311.4 82.9,318.3 83.1,325.4 83.3,332.7 83.5,340.2 83.7,347.8 83.9,355.7 84.1,363.7 84.4,371.9 84.6,380.3 84.8,388.8 85.0,397.5 85.2,406.4"/>
<polyline stroke="#ff0000" points="173.1,406.4 173.3,397.5 173.5,388.8 173.7,380.3 173.9,371.9 174.2,363.7 174.4,355.7 174.6,347.8 174.8,340.2 175.0,332.7 175.2,325.4 175.4,318.3 175.7,311.4 175.9,304.7 176.1,298.2 176.3,291.8 176.5,285.7 176.7,279.7 177.0,274.0 177.2,268.4 177.4,263.0 177.6,257.8 177.8,252.8 178.0,248.1 178.2,243.5 178.5,239.1 178.7,234.9 178.9,230.9 179.1,227.1 179.3,223.5 179.5,220.1 179.8,216.9 180.0,214.0 180.2,211.2 180.4,208.6 180.6,206.2 180.8,204.1 181.0,201.2 181.3,197.9 181.5,195.0 181.7,192.4 181.9,190.3 182.1,188.5 182.3,187.2 182.6,186.2 182.8,185.6 183.0,185.4 183.2,185.6 183.4,186.2 183.6,187.2 183.8,188.5 184.1,190.3 184.3,192.4 184.5,195.0 184.7,197.9 184.9,201.2 185.1,204.1 185.4,206.2 185.6,208.6 185.8,211.2 186.0,214.0 186.2,216.9 186.4,220.1 186.6,223.5 186.9,227.1 187.1,230.9 187.3,234.9 187.5,239.1 187.7,243.5 187.9,248.1 188.2,252.8 188.4,257.8 188.6,263.0 188.8,268.4 189.0,274.0 189.2,279.7 189.4,285.7 189.7,291.8 189.9,298.2 190.1,304.7 190.3,311.4 190.5,318.3 190.7,325.4 191.0,332.7 191.2,340.2 191.4,347.8 191.6,355.7 191.8,363.7 192.0,371.9 192.2,380.3 192.5,388.8 192.7,397.5 192.9,406.4"/>
<polyline stroke="#ff0000" points="280.7,406.4 281.0,397.5 281.2,388.8 281.4,380.3 281.6,371.9 281.8,363.7 282.0,355.7 282.3,347.8 282.5,340.2 282.7,332.7 282.9,325.4 283.1,318.3 283.3,311.4 283.5,304.7 283.8,298.2 284.0,291.8 284.2,285.7 284.4,279.7 284.6,274.0 284.8,268.4 285.1,263.0 285.3,257.8 285.5,252.8 285.7,248.1 285.9,243.5 286.1,239.1 286.3,234.9 286.6,230.9 286.8,227.1 287.0,223.5 287.2,220.1 287.4,216.9 287.6,214.0 287.9,211.2 288.1,208.6 288.3,206.2 288.5,204.1 288.7,201.2 288.9,197.9 289.1,195.0 289.4,192.4 289.6,190.3 289.8,188.5 290.0,187.2 290.2,186.2 290.4,185.6 290.7,185.4 290.9,185.6 291.1,186.2 291.3,187.2 291.5,188.5 291.7,190.3 291.9,192.4 292.2,195.0 292.4,197.9 292.6,201.2 292.8,204.1 293.0,206.2 293.2,208.6 293.4,211.2 293.7,214.0 293.9,216.9 294.1,220.1 294.3,223.5 294.5,227.1 294.7,230.9 295.0,234.9 295.2,239.1 295.4,243.5 295.6,248.1 295.8,252.8 296.0,257.8 296.2,263.0 296.5,268.4 296.7,274.0 296.9,279.7 297.1,285.7 297.3,291.8 297.5,298.2 297.8,304.7 298.0,311.4 298.2,318.3 298.4,325.4 298.6,332.7 298.8,340.2 299.0,347.8 299.3,355.7 299.5,363.7 299.7,371.9 299.9,380.3 300.1,388.8 300.3,397.5 300.6,406.4"/>
<polyline stroke="#ff0000" points="388.4,406.4 388.6,397.5 388.8,388.8 389.1,380.3 389.3,371.9 389.5,363.7 389.7,355.7 389.9,347.8 390.1,340.2 390.3,332.7 390.6,325.4 390.8,318.3 391.0,311.4 391.2,304.7 391.4,298.2 391.6,291.8 391.9,285.7 392.1,279.7 392.3,274.0 392.5,268.4 392.7,263.0 392.9,257.8 393.1,252.8 393.4,248.1 393.6,243.5 393.8,239.1 394.0,234.9 394.2,230.9 394.4,227.1 394.7,223.5 394.9,220.1 395.1,216.9 395.3,214.0 395.5,211.2 395.7,208.6 395.9,206.2 396.2,204.1 396.4,201.2 396.6,197.9 396.8,195.0 397.0,192.4 397.2,190.3 397.5,188.5 397.7,187.2 397.9,186.2 398.1,185.6 398.3,185.4 398.5,185.6 398.7,186.2 399.0,187.2 399.2,188.5 399.4,190.3 399.6,192.4 399.8,195.0 400.0,197.9 400.3,201.2 400.5,204.1 400.7,206.2 400.9,208.6 401.1,211.2 401.3,214.0 401.5,216.9 401.8,220.1 402.0,223.5 402.2,227.1 402.4,230.9 402.6,234.9 402.8,239.1 403.1,243.5 403.3,248.1 403.5,252.8 403.7,257.8 403.9,263.0 404.1,268.4 404.3,274.0 404.6,279.7 404.8,285.7 405.0,291.8 405.2,298.2 405.4,304.7 405.6,311.4 405.9,318.3 406.1,325.4 406.3,332.7 406.5,340.2 406.7,347.8 406.9,355.7 407.1,363.7 407.4,371.9 407.6,380.3 407.8,388.8 408.0,397.5 408.2,406.4"/>
<polyline stroke="#ff0000" points="496.1,406.4 496.3,397.5 496.5,388.8 496.7,380.3 496.9,371.9 497.2,363.7 497.4,355.7 497.6,347.8 497.8,340.2 498.0,332.7 498.2,325.4 498.4,318.3 498.7,311.4 498.9,304.7 499.1,298.2 499.3,291.8 499.5,285.7 499.7,279.7 500.0,274.0 500.2,268.4 500.4,263.0 500.6,257.8 500.8,252.8 501.0,248.1 501.2,243.5 501.5,239.1 501.7,234.9 501.9,230.9 502.1,227.1 502.3,223.5 502.5,220.1 502.8,216.9 503.0,214.0 503.2,211.2 503.4,208.6 503.6,206.2 503.8,204.1 504.0,201.2 504.3,197.9 504.5,195.0 504.7,192.4 504.9,190.3 505.1,188.5 505.3,187.2 505.6,186.2 505.8,185.6 506.0,185.4 506.2,185.6 506.4,186.2 506.6,187.2 506.8,188.5 507.1,190.3 507.3,192.4 507.5,195.0 507.7,197.9 507.9,201.2 508.1,204.1 508.4,206.2 508.6,208.6 508.8,211.2 509.0,214.0 509.2,216.9 509.4,220.1 509.6,223.5 509.9,227.1 510.1,230.9 510.3,234.9 510.5,239.1 510.7,243.5 510.9,248.1 511.2,252.8 511.4,257.8 511.6,263.0 511.8,268.4 512.0,274.0 512.2,279.7 512.4,285.7 512.7,291.8 512.9,298.2 513.1,304.7 513.3,311.4 513.5,318.3 513.7,325.4 514.0,332.7 514.2,340.2 514.4,347.8 514.6,355.7 514.8,363.7 515.0,371.9 515.2,380.3 515.5,388.8 515.7,397.5 515.9,406.4"/>
<polyline stroke="#ff0000" points="603.7,406.4 604.0,397.5 604.2,388.8 604.4,380.3 604.6,371.9 604.8,363.7 605.0,355.7 605.3,347.8 605.5,340.2 605.7,332.7 605.9,325.4 606.1,318.3 606.3,311.4 606.5,304.7 606.8,298.2 607.0,291.8 607.2,285.7 607.4,279.7 607.6,274.0 607.8,268.4 608.1,263.0 608.3,257.8 608.5,252.8 608.7,248.1 608.9,243.5 609.1,239.1 609.3,234.9 609.6,230.9 609.8,227.1 610.0,223.5 610.2,220.1 610.4,216.9 610.6,214.0 610.9,211.2 611.1,208.6 611.3,206.2 611.5,204.1 611.7,201.2 611.9,197.9 612.1,195.0 612.4,192.4 612.6,190.3 612.8,188.5 613.0,187.2 613.2,186.2 613.4,185.6 613.6,185.4 613.9,185.6 614.1,186.2 614.3,187.2 614.5,188.5 614.7,190.3 614.9,192.4 615.2,195.0 615.4,197.9 615.6,201.2 615.8,204.1 616.0,206.2 616.2,208.6 616.4,211.2 616.7,214.0 616.9,216.9 617.1,220.1 617.3,223.5 617.5,227.1 617.7,230.9 618.0,234.9 618.2,239.1 618.4,243.5 618.6,248.1 618.8,252.8 619.0,257.8 619.2,263.0 619.5,268.4 619.7,274.0 619.9,279.7 620.1,285.7 620.3,291.8 620.5,298.2 620.8,304.7 621.0,311.4 621.2,318.3 621.4,325.4 621.6,332.7 621.8,340.2 622.0,347.8 622.3,355.7 622.5,363.7 622.7,371.9 622.9,380.3 623.1,388.8 623.3,397.5 623.6,406.4"/>
<polyline stroke="#ff0000" points="711.4,406.4 711.6,397.5 711.8,388.8 712.1,380.3 712.3,371.9 712.5,363.7 712.7,355.7 712.9,347.8 713.1,340.2 713.3,332.7 713.6,325.4 713.8,318.3 714.0,311.4 714.2,304.7 714.4,298.2 714.6,291.8 714.9,285.7 715.1,279.7 715.3,274.0 715.5,268.4 715.7,263.0 715.9,257.8 716.1,252.8 716.4,248.1 716.6,243.5 716.8,239.1 717.0,234.9 717.2,230.9 717.4,227.1 717.7,223.5 717.9,220.1 718.1,216.9 718.3,214.0 718.5,211.2 718.7,208.6 718.9,206.2 719.2,204.1 719.4,201.2 719.6,197.9 719.8,195.0 720.0,192.4 720.2,190.3 720.5,188.5 720.7,187.2 720.9,186.2 721.1,185.6 721.3,185.4 721.5,185.6 721.7,186.2 722.0,187.2 722.2,188.5 722.4,190.3 722.6,192.4 722.8,195.0 723.0,197.9 723.3,201.2 723.5,204.1 723.7,206.2 723.9,208.6 724.1,211.2 724.3,214.0 724.5,216.9 724.8,220.1 725.0,223.5 725.2,227.1 725.4,230.9 725.6,234.9 725.8,239.1 726.1,243.5 726.3,248.1 726.5,252.8 726.7,257.8 726.9,263.0 727.1,268.4 727.3,274.0 727.6,279.7 727.8,285.7 728.0,291.8 728.2,298.2 728.4,304.7 728.6,311.4 728.9,318.3 729.1,325.4 729.3,332.7 729.5,340.2 729.7,347.8 729.9,355.7 730.1,363.7 730.4,371.9 730.6,380.3 730.8,388.8 731.0,397.5 731.2,406.4"/>
<polyline stroke="#ff0000" points="819.1,406.4 819.3,397.5 819.5,388.8 819.7,380.3 819.9,371.9 820.2,363.7 820.4,355.7 820.6,347.8 820.8,340.2 821.0,332.7 821.2,325.4 821.4,318.3 821.7,311.4 821.9,304.7 822.1,298.2 822.3,291.8 822.5,285.7 822.7,279.7 823.0,274.0 823.2,268.4 823.4,263.0 823.6,257.8 823.8,252.8 824.0,248.1 824.2,243.5 824.5,239.1 824.7,234.9 824.9,230.9 825.1,227.1 825.3,223.5 825.5,220.1 825.8,216.9 826.0,214.0 826.2,211.2 826.4,208.6 826.6,206.2 826.8,204.1 827.0,201.2 827.3,197.9 827.5,195.0 827.7,192.4 827.9,190.3 828.1,188.5 828.3,187.2 828.6,186.2 828.8,185.6 829.0,185.4 829.2,185.6 829.4,186.2 829.6,187.2 829.8,188.5 830.1,190.3 830.3,192.4 830.5,195.0 830.7,197.9 830.9,201.2 831.1,204.1 831.4,206.2 831.6,208.6 831.8,211.2 832.0,214.0 832.2,216.9 832.4,220.1 832.6,223.5 832.9,227.1 833.1,230.9 833.3,234.9 833.5,239.1 833.7,243.5 833.9,248.1 834.2,252.8 834.4,257.8 834.6,263.0 834.8,268.4 835.0,274.0 835.2,279.7 835.4,285.7 835.7,291.8 835.9,298.2 836.1,304.7 836.3,311.4 836.5,318.3 836.7,325.4 837.0,332.7 837.2,340.2 837.4,347.8 837.6,355.7 837.8,363.7 838.0,371.9 838.2,380.3 838.5,388.8 838.7,397.5 838.9,406.4"/>
<polyline stroke="#ff0000" points="926.7,406.4 927.0,397.5 927.2,388.8 927.4,380.3 927.6,371.9 927.8,363.7 928.0,355.7 928.3,347.8 928.5,340.2 928.7,332.7 928.9,325.4 929.1,318.3 929.3,311.4 929.5,304.7 929.8,298.2 930.0,291.8 930.2,285.7 930.4,279.7 930.6,274.0 930.8,268.4 931.1,263.0 931.3,257.8 931.5,252.8 931.7,248.1 931.9,243.5 932.1,239.1 932.3,234.9 932.6,230.9 932.8,227.1 933.0,223.5 933.2,220.1 933.4,216.9 933.6,214.0 933.9,211.2 934.1,208.6 934.3,206.2 934.5,204.1 934.7,201.2 934.9,197.9 935.1,195.0 935.4,192.4 935.6,190.3 935.8,188.5 936.0,187.2 936.2,186.2 936.4,185.6 936.6,185.4 936.9,185.6 937.1,186.2 937.3,187.2 937.5,188.5 937.7,190.3 937.9,192.4 938.2,195.0 938.4,197.9 938.6,201.2 938.8,204.1 939.0,206.2 939.2,208.6 939.4,211.2 939.7,214.0 939.9,216.9 940.1,220.1 940.3,223.5 940.5,227.1 940.7,230.9 941.0,234.9 941.2,239.1 941.4,243.5 941.6,248.1 941.8,252.8 942.0,257.8 942.2,263.0 942.5,268.4 942.7,274.0 942.9,279.7 943.1,285.7 943.3,291.8 943.5,298.2 943.8,304.7 944.0,311.4 944.2,318.3 944.4,325.4 944.6,332.7 944.8,340.2 945.0,347.8 945.3,355.7 945.5,363.7 945.7,371.9 945.9,380.3 946.1,388.8 946.3,397.5 946.6,406.4"/>
<polyline stroke="#ff0000" points="1034.4,406.4 1034.6,397.5 1034.8,388.8 1035.1,380.3 1035.3,371.9 1035.5,363.7 1035.7,355.7 1035.9,347.8 1036.1,340.2 1036.3,332.7 1036.6,325.4 1036.8,318.3 1037.0,311.4 1037.2,304.7 1037.4,298.2 1037.6,291.8 1037.9,285.7 1038.1,279.7 1038.3,274.0 1038.5,268.4 1038.7,263.0 1038.9,257.8 1039.1,252.8 1039.4,248.1 1039.6,243.5 1039.8,239.1 1040.0,234.9 1040.2,230.9 1040.4,227.1 1040.7,223.5 1040.9,220.1 1041.1,216.9 1041.3,214.0 1041.5,211.2 1041.7,208.6 1041.9,206.2 1042.2,204.1 1042.4,201.2 1042.6,197.9 1042.8,195.0 1043.0,192.4 1043.2,190.3 1043.5,188.5 1043.7,187.2 1043.9,186.2 1044.1,185.6 1044.3,185.4 1044.5,185.6 1044.7,186.2 1045.0,187.2 1045.2,188.5 1045.4,190.3 1045.6,192.4 1045.8,195.0 1046.0,197.9 1046.3,201.2 1046.5,204.1 1046.7,206.2 1046.9,208.6 1047.1,211.2 1047.3,214.0 1047.5,216.9 1047.8,220.1 1048.0,223.5 1048.2,227.1 1048.4,230.9 1048.6,234.9 1048.8,239.1 1049.1,243.5 1049.3,248.1 1049.5,252.8 1049.7,257.8 1049.9,263.0 1050.1,268.4 1050.3,274.0 1050.6,279.7 1050.8,285.7 1051.0,291.8 1051.2,298.2 1051.4,304.7 1051.6,311.4 1051.9,318.3 1052.1,325.4 1052.3,332.7 1052.5,340.2 1052.7,347.8 1052.9,355.7 1053.1,363.7 1053.4,371.9 1053.6,380.3 1053.8,388.8 1054.0,397.5 1054.2,406.4"/>
<polyline stroke="#ff0000" points="1142.1,406.4 1142.3,397.5 1142.5,388.8 1142.7,380.3 1142.9,371.9 1143.2,363.7 1143.4,355.7 1143.6,347.8 1143.8,340.2 1144.0,332.7 1144.2,325.4 1144.4,318.3 1144.7,311.4 1144.9,304.7 1145.1,298.2 1145.3,291.8 1145.5,285.7 1145.7,279.7 1146.0,274.0 1146.2,268.4 1146.4,263.0 1146.6,257.8 1146.8,252.8 1147.0,248.1 1147.2,243.5 1147.5,239.1 1147.7,234.9 1147.9,230.9 1148.1,227.1 1148.3,223.5 1148.5,220.1 1148.8,216.9 1149.0,214.0 1149.2,211.2 1149.4,208.6 1149.6,206.2 1149.8,204.1 1150.0,201.2 1150.3,197.9 1150.5,195.0 1150.7,192.4 1150.9,190.3 1151.1,188.5 1151.3,187.2 1151.6,186.2 1151.8,185.6 1152.0,185.4 1152.2,185.6 1152.4,186.2 1152.6,187.2 1152.8,188.5 1153.1,190.3 1153.3,192.4 1153.5,195.0 1153.7,197.9 1153.9,201.2 1154.1,204.1 1154.4,206.2 1154.6,208.6 1154.8,211.2 1155.0,214.0 1155.2,216.9 1155.4,220.1 1155.6,223.5 1155.9,227.1 1156.1,230.9 1156.3,234.9 1156.5,239.1 1156.7,243.5 1156.9,248.1 1157.2,252.8 1157.4,257.8 1157.6,263.0 1157.8,268.4 1158.0,274.0 1158.2,279.7 1158.4,285.7 1158.7,291.8 1158.9,298.2 1159.1,304.7 1159.3,311.4 1159.5,318.3 1159.7,325.4 1160.0,332.7 1160.2,340.2 1160.4,347.8 1160.6,355.7 1160.8,363.7 1161.0,371.9 1161.2,380.3 1161.5,388.8 1161.7,397.5 1161.9,406.4"/>
<polyline stroke="#ff0000" points="1249.7,406.4 1250.0,397.5 1250.2,388.8 1250.4,380.3 1250.6,371.9 1250.8,363.7 1251.0,355.7 1251.3,347.8 1251.5,340.2 1251.7,332.7 1251.9,325.4 1252.1,318.3 1252.3,311.4 1252.5,304.7 1252.8,298.2 1253.0,291.8 1253.2,285.7 1253.4,279.7 1253.6,274.0 1253.8,268.4 1254.1,263.0 1254.3,257.8 1254.5,252.8 1254.7,248.1 1254.9,243.5 1255.1,239.1 1255.3,234.9 1255.6,230.9 1255.8,227.1 1256.0,223.5 1256.2,220.1 1256.4,216.9 1256.6,214.0 1256.9,211.2 1257.1,208.6 1257.3,206.2 1257.5,204.1 1257.7,201.2 1257.9,197.9 1258.1,195.0 1258.4,192.4 1258.6,190.3 1258.8,188.5 1259.0,187.2 1259.2,186.2 1259.4,185.6 1259.7,185.4 1259.9,185.6 1260.1,186.2 1260.3,187.2 1260.5,188.5 1260.7,190.3 1260.9,192.4 1261.2,195.0 1261.4,197.9 1261.6,201.2 1261.8,204.1 1262.0,206.2 1262.2,208.6 1262.4,211.2 1262.7,214.0 1262.9,216.9 1263.1,220.1 1263.3,223.5 1263.5,227.1 1263.7,230.9 1264.0,234.9 1264.2,239.1 1264.4,243.5 1264.6,248.1 1264.8,252.8 1265.0,257.8 1265.2,263.0 1265.5,268.4 1265.7,274.0 1265.9,279.7 1266.1,285.7 1266.3,291.8 1266.5,298.2 1266.8,304.7 1267.0,311.4 1267.2,318.3 1267.4,325.4 1267.6,332.7 1267.8,340.2 1268.0,347.8 1268.3,355.7 1268.5,363.7 1268.7,371.9 1268.9,380.3 1269.1,388.8 1269.3,397.5 1269.6,406.4"/>
</g>
</svg>
</div></div></div>
<div class="child" style="top:423px">
<div class="ctitle" style="background:linear-gradient(90deg,#0a246a,#a6caf0)"><span style="color:#fff">Netzteilsim.asc</span><div class="cbtn" style="left:1302px"><div class="px" style="left:4px;top:9px;width:6px;height:2px;background:#000"></div></div><div class="cbtn" style="left:1318px"><div class="px" style="left:3px;top:2px;width:9px;height:9px;box-sizing:border-box;border:1px solid #606060;border-top:2px solid #505050;box-shadow:1px 1px 0 #fff"></div></div><div class="cbtn" style="left:1336px"><svg width="16" height="14" viewBox="0 0 16 14"><path d="M4.5 3.2 L11.5 10.2 M11.5 3.2 L4.5 10.2" stroke="#000" stroke-width="1.5" fill="none"/></svg></div><svg width="16" height="16" viewBox="0 0 16 16" style="left:2px;top:1px" shape-rendering="crispEdges"><rect x="5" y="3" width="2" height="6" fill="#000"/><rect x="7" y="8" width="1" height="2" fill="#000"/><rect x="8" y="9" width="1" height="2" fill="#000"/><rect x="9" y="10" width="1" height="2" fill="#000"/><rect x="10" y="11" width="1" height="1" fill="#000"/></svg></div>
<div class="view"><div class="content" style="background:linear-gradient(#c0c0c0,#c0c0c0)">
<svg width="1350" height="294" viewBox="8 448 1350 294" font-family="Liberation Sans, sans-serif">
<g shape-rendering="crispEdges" stroke-width="1" fill="none">
<line x1="525" y1="483.5" x2="799" y2="483.5" stroke="#0000ff"/>
<line x1="850" y1="483.5" x2="1030" y2="483.5" stroke="#0000ff"/>
<line x1="525" y1="703.5" x2="1030" y2="703.5" stroke="#0000ff"/>
<line x1="347.5" y1="535" x2="347.5" y2="568" stroke="#0000ff"/>
<line x1="347" y1="535.5" x2="411" y2="535.5" stroke="#0000ff"/>
<line x1="410.5" y1="535" x2="410.5" y2="578" stroke="#0000ff"/>
<line x1="410" y1="577.5" x2="526" y2="577.5" stroke="#0000ff"/>
<line x1="347.5" y1="619" x2="347.5" y2="652" stroke="#0000ff"/>
<line x1="347" y1="651.5" x2="411" y2="651.5" stroke="#0000ff"/>
<line x1="410.5" y1="609" x2="410.5" y2="652" stroke="#0000ff"/>
<line x1="410" y1="609.5" x2="620" y2="609.5" stroke="#0000ff"/>
<line x1="525.5" y1="483" x2="525.5" y2="515" stroke="#0000ff"/>
<line x1="525.5" y1="557" x2="525.5" y2="630" stroke="#0000ff"/>
<line x1="525.5" y1="673" x2="525.5" y2="704" stroke="#0000ff"/>
<line x1="525.5" y1="514" x2="525.5" y2="528" stroke="#00008b"/>
<line x1="525.5" y1="543" x2="525.5" y2="557" stroke="#00008b"/>
<line x1="514" y1="527.5" x2="536" y2="527.5" stroke="#00008b"/>
<line x1="514" y1="543.5" x2="536" y2="543.5" stroke="#00008b"/>
<line x1="525.5" y1="630" x2="525.5" y2="644" stroke="#00008b"/>
<line x1="525.5" y1="659" x2="525.5" y2="673" stroke="#00008b"/>
<line x1="514" y1="643.5" x2="536" y2="643.5" stroke="#00008b"/>
<line x1="514" y1="659.5" x2="536" y2="659.5" stroke="#00008b"/>
<line x1="619.5" y1="483" x2="619.5" y2="515" stroke="#0000ff"/>
<line x1="619.5" y1="557" x2="619.5" y2="630" stroke="#0000ff"/>
<line x1="619.5" y1="673" x2="619.5" y2="704" stroke="#0000ff"/>
<line x1="619.5" y1="514" x2="619.5" y2="528" stroke="#00008b"/>
<line x1="619.5" y1="543" x2="619.5" y2="557" stroke="#00008b"/>
<line x1="609" y1="527.5" x2="631" y2="527.5" stroke="#00008b"/>
<line x1="609" y1="543.5" x2="631" y2="543.5" stroke="#00008b"/>
<line x1="619.5" y1="630" x2="619.5" y2="644" stroke="#00008b"/>
<line x1="619.5" y1="659" x2="619.5" y2="673" stroke="#00008b"/>
<line x1="609" y1="643.5" x2="631" y2="643.5" stroke="#00008b"/>
<line x1="609" y1="659.5" x2="631" y2="659.5" stroke="#00008b"/>
<line x1="756.5" y1="483" x2="756.5" y2="578" stroke="#0000ff"/>
<line x1="756.5" y1="619" x2="756.5" y2="704" stroke="#0000ff"/>
<line x1="756.5" y1="578" x2="756.5" y2="597" stroke="#00008b"/>
<line x1="756.5" y1="601" x2="756.5" y2="619" stroke="#00008b"/>
<line x1="745" y1="596.5" x2="767" y2="596.5" stroke="#00008b"/>
<line x1="748" y1="588.5" x2="754" y2="588.5" stroke="#00008b"/>
<line x1="750.5" y1="585" x2="750.5" y2="591" stroke="#00008b"/>
<line x1="882.5" y1="483" x2="882.5" y2="578" stroke="#0000ff"/>
<line x1="882.5" y1="619" x2="882.5" y2="704" stroke="#0000ff"/>
<line x1="882.5" y1="578" x2="882.5" y2="597" stroke="#00008b"/>
<line x1="882.5" y1="601" x2="882.5" y2="619" stroke="#00008b"/>
<line x1="871" y1="596.5" x2="893" y2="596.5" stroke="#00008b"/>
<line x1="874" y1="588.5" x2="880" y2="588.5" stroke="#00008b"/>
<line x1="876.5" y1="585" x2="876.5" y2="591" stroke="#00008b"/>
<line x1="1029.5" y1="483" x2="1029.5" y2="578" stroke="#0000ff"/>
<line x1="1029.5" y1="631" x2="1029.5" y2="724" stroke="#0000ff"/>
<line x1="1029.5" y1="578" x2="1029.5" y2="583" stroke="#00008b"/>
<line x1="1029.5" y1="625" x2="1029.5" y2="631" stroke="#00008b"/>
<line x1="799" y1="483.5" x2="804" y2="483.5" stroke="#00008b"/>
<line x1="845" y1="483.5" x2="850" y2="483.5" stroke="#00008b"/>
<line x1="1017" y1="724.5" x2="1041" y2="724.5" stroke="#0000ff"/>
<line x1="347.5" y1="568" x2="347.5" y2="573" stroke="#00008b"/>
<line x1="347.5" y1="614" x2="347.5" y2="619" stroke="#00008b"/>
<line x1="341" y1="580.5" x2="353" y2="580.5" stroke="#00008b"/>
<line x1="347.5" y1="575" x2="347.5" y2="586" stroke="#00008b"/>
<line x1="341" y1="606.5" x2="353" y2="606.5" stroke="#00008b"/>
</g>
<g fill="#0000ff" shape-rendering="crispEdges">
<rect x="522" y="574" width="7" height="7"/>
<rect x="616" y="606" width="7" height="7"/>
<rect x="616" y="480" width="7" height="7"/>
<rect x="753" y="480" width="7" height="7"/>
<rect x="879" y="480" width="7" height="7"/>
<rect x="616" y="700" width="7" height="7"/>
<rect x="753" y="700" width="7" height="7"/>
<rect x="879" y="700" width="7" height="7"/>
<rect x="1026" y="700" width="7" height="7"/>
</g>
<g stroke="#00008b" stroke-width="1" fill="none">
<path d="M514.5 543.5 L525.5 527.5 L535.5 543.5"/>
<path d="M514.5 659.5 L525.5 643.5 L535.5 659.5"/>
<path d="M609.5 543.5 L619.5 527.5 L630.5 543.5"/>
<path d="M609.5 659.5 L619.5 643.5 L630.5 659.5"/>
<path d="M745.2 604.8 Q756.5 598.2 767.8 604.8"/>
<path d="M871.2 604.8 Q882.5 598.2 893.8 604.8"/>
<circle cx="347" cy="593" r="20.5"/>
<path d="M1029.5 583 L1040 588.5 L1019 599 L1040 609.5 L1019 620 L1029.5 625"/>
<path d="M803.5 483.5 L808.7 472.8 L819.2 493.8 L829.7 472.8 L840.2 493.8 L845.3 483.5"/>
<path d="M1017.5 724.5 L1029.5 736.5 L1041.5 724.5" stroke="#0000ff"/>
</g>
<g font-size="14" font-weight="bold" fill="#000" stroke="#000" stroke-width="0.2">
<text x="341.2" y="525" text-anchor="start" letter-spacing="0.28">.tran 2s</text>
<text x="361.8" y="571.6" text-anchor="start" letter-spacing="0">V1</text>
<text x="362.6" y="623.6" text-anchor="start" letter-spacing="0.28">SINE(0 325 50)</text>
<text x="501" y="518.6" text-anchor="start" letter-spacing="0.28">D2</text>
<text x="595" y="518.6" text-anchor="start" letter-spacing="0.28">D1</text>
<text x="458" y="560.6" text-anchor="start" letter-spacing="0.28">D1N4007</text>
<text x="552" y="560.6" text-anchor="start" letter-spacing="0.28">D1N4007</text>
<text x="501" y="634.6" text-anchor="start" letter-spacing="0.28">D3</text>
<text x="595" y="634.6" text-anchor="start" letter-spacing="0.28">D4</text>
<text x="458" y="676.6" text-anchor="start" letter-spacing="0.28">D1N4007</text>
<text x="552" y="676.6" text-anchor="start" letter-spacing="0.28">D1N4007</text>
<text x="446.3" y="697.6" text-anchor="start" letter-spacing="0.32">.lib 1n4007_vishay.txt</text>
<text x="815" y="467.6" text-anchor="start" letter-spacing="0.28">R1</text>
<text x="811.8" y="506.6" text-anchor="start" letter-spacing="0.28">330</text>
<text x="761.5" y="587.6" text-anchor="start" letter-spacing="0.28">C1</text>
<text x="760.6" y="619.6" text-anchor="start" letter-spacing="0.28">235µ</text>
<text x="887.5" y="587.6" text-anchor="start" letter-spacing="0.28">C2</text>
<text x="886.6" y="619.6" text-anchor="start" letter-spacing="0.28">165µ</text>
<text x="996" y="594.6" text-anchor="start" letter-spacing="0.28">R2</text>
<text x="998.6" y="618.4" text-anchor="start" letter-spacing="0.28">5k</text>
</g>
</svg>
</div></div></div>
<div class="abs" style="left:1310px;top:752px;width:56px;height:16px;box-shadow:inset -1px -1px 0 #fff, inset 1px 1px 0 #808080;"></div>
<svg width="1366" height="768" viewBox="0 0 1366 768" style="pointer-events:none"><g shape-rendering="crispEdges" stroke-width="1">
<path d="M1353 767 L1365 755 M1357 767 L1365 759 M1361 767 L1365 763" stroke="#fff" fill="none"/>
<path d="M1354 767 L1365 756 M1355 767 L1365 757 M1358 767 L1365 760 M1359 767 L1365 761 M1362 767 L1365 764 M1363 767 L1365 765" stroke="#808080" fill="none"/>
<path d="M1310 767.5 H1366" stroke="#fff" fill="none"/>
</g></svg>
</body></html>
